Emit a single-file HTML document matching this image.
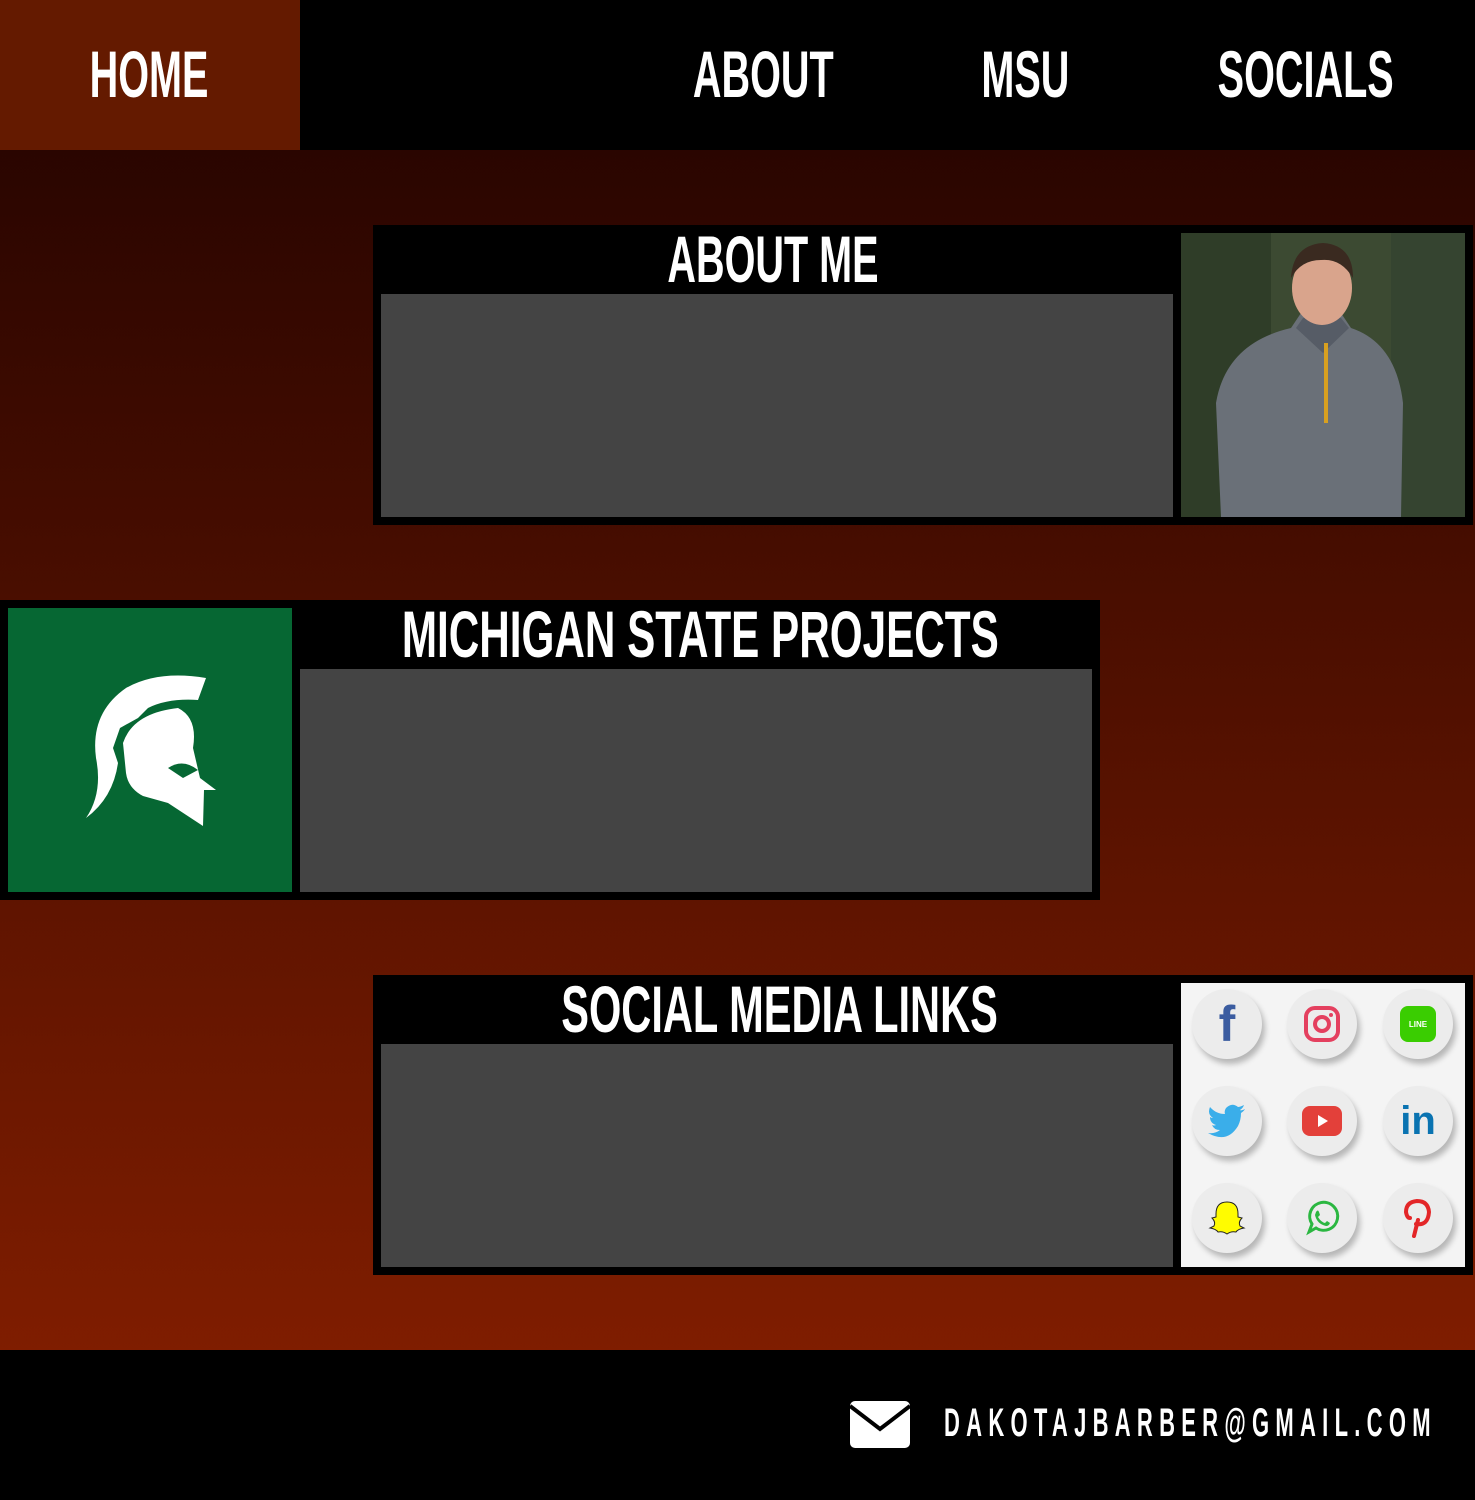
<!DOCTYPE html>
<html><head><meta charset="utf-8"><style>
*{margin:0;padding:0;box-sizing:border-box}
body{width:1475px;height:1500px;position:relative;overflow:hidden;background:linear-gradient(#2a0500 150px,#7f1d00 1350px);font-family:"Liberation Sans",sans-serif;font-weight:bold;color:#fff}
.a{position:absolute}
.t{position:absolute;text-align:center;font-size:66px;line-height:66px;white-space:nowrap;width:2000px}
.t span{display:inline-block;transform:scaleX(.6)}
.gray{position:absolute;background:#444}
.ic{position:absolute;width:70px;height:70px;border-radius:50%;background:#ececec;box-shadow:3px 5px 6px rgba(0,0,0,.25);display:flex;align-items:center;justify-content:center}
</style></head><body>
<div class="a" style="left:0;top:0;width:1475px;height:150px;background:#000"></div>
<div class="a" style="left:0;top:0;width:300px;height:150px;background:#641a00"></div>
<div class="t" style="left:-851px;top:41px"><span>HOME</span></div>
<div class="t" style="left:-237px;top:41px"><span>ABOUT</span></div>
<div class="t" style="left:25px;top:41px"><span>MSU</span></div>
<div class="t" style="left:306px;top:41px"><span>SOCIALS</span></div>

<!-- about -->
<div class="a" style="left:373px;top:225px;width:1100px;height:300px;background:#000"></div>
<div class="t" style="left:-227px;top:226px"><span>ABOUT ME</span></div>
<div class="gray" style="left:381px;top:294px;width:792px;height:223px"></div>
<svg class="a" style="left:1181px;top:233px" width="284" height="284" viewBox="0 0 284 284">
<rect width="284" height="284" fill="#3c4a32"/>
<rect x="0" y="0" width="90" height="284" fill="#2f3d28"/>
<rect x="210" y="0" width="74" height="284" fill="#354430"/>
<path d="M40 284 L35 170 Q45 110 110 95 L120 80 L160 80 L170 95 Q215 110 222 170 L220 284Z" fill="#6a7078"/>
<path d="M115 95 L142 120 L168 95 L160 85 L122 85Z" fill="#565c66"/>
<rect x="143" y="110" width="4" height="80" fill="#d8a020"/>
<ellipse cx="141" cy="55" rx="30" ry="37" fill="#d9a48c"/>
<path d="M110 45 Q112 12 142 10 Q172 12 172 45 Q160 25 140 27 Q120 27 110 45Z" fill="#3a2a20"/>
</svg>

<!-- msu -->
<div class="a" style="left:0;top:600px;width:1100px;height:300px;background:#000"></div>
<div class="a" style="left:8px;top:608px;width:284px;height:284px;background:#066733"></div>
<svg class="a" style="left:8px;top:608px" width="284" height="284" viewBox="0 0 284 284">
<path d="M78 210 Q95 185 88 150 Q82 105 118 80 Q150 62 198 70 L190 92 Q160 90 140 100 L130 110 L112 120 L105 140 L110 155 Q105 190 78 210Z" fill="#fff"/>
<path d="M115 135 Q125 105 170 100 Q190 110 185 140 L192 170 L208 182 L196 182 L195 218 L160 195 L135 188 Q120 180 118 165Z" fill="#fff"/>
<path d="M160 160 Q175 150 190 162 L175 170Z" fill="#066733"/>
</svg>
<div class="t" style="left:-300px;top:601px"><span style="transform:scaleX(.64)">MICHIGAN STATE PROJECTS</span></div>
<div class="gray" style="left:300px;top:669px;width:792px;height:223px"></div>

<!-- social -->
<div class="a" style="left:373px;top:975px;width:1100px;height:300px;background:#000"></div>
<div class="t" style="left:-220px;top:976px"><span style="transform:scaleX(.63)">SOCIAL MEDIA LINKS</span></div>
<div class="gray" style="left:381px;top:1044px;width:792px;height:223px"></div>
<div class="a" style="left:1181px;top:983px;width:284px;height:284px;background:#f4f4f4"></div>
<div class="ic" style="left:1192px;top:989px"><span style="color:#3b5ca0;font-size:50px;font-family:'Liberation Sans'">f</span></div>
<div class="ic" style="left:1287px;top:989px"><svg width="36" height="36" viewBox="0 0 36 36"><rect x="2" y="2" width="32" height="32" rx="9" fill="none" stroke="#e4405f" stroke-width="4"/><circle cx="18" cy="18" r="7" fill="none" stroke="#e4405f" stroke-width="4"/><circle cx="27" cy="9" r="2" fill="#e4405f"/></svg></div>
<div class="ic" style="left:1383px;top:989px"><div style="width:36px;height:36px;border-radius:8px;background:#3acd01;color:#fff;font-size:8px;display:flex;align-items:center;justify-content:center">LINE</div></div>
<div class="ic" style="left:1192px;top:1086px"><svg width="40" height="34" viewBox="0 0 40 34"><path d="M38 5 Q34 7 33 6 Q36 4 37 1 Q33 3 31 3 Q25 -2 19 4 Q17 7 18 10 Q9 10 3 3 Q0 10 6 14 Q4 14 3 13 Q3 19 9 21 Q7 22 5 21 Q7 26 13 26 Q8 30 1 29 Q20 40 31 22 Q34 16 34 9 Q37 7 38 5Z" fill="#3aaeea"/></svg></div>
<div class="ic" style="left:1287px;top:1086px"><svg width="40" height="30" viewBox="0 0 40 30"><rect width="40" height="30" rx="8" fill="#e3403a"/><path d="M16 9 L26 15 L16 21Z" fill="#fff"/></svg></div>
<div class="ic" style="left:1383px;top:1086px"><span style="color:#0a73b1;font-size:40px">in</span></div>
<div class="ic" style="left:1192px;top:1183px"><svg width="38" height="38" viewBox="0 0 38 38"><path d="M19 3 Q30 3 30 15 L30 18 L34 19 Q30 23 32 27 L36 29 Q30 30 28 33 Q23 32 19 35 Q15 32 10 33 Q8 30 2 29 L6 27 Q8 23 4 19 L8 18 L8 15 Q8 3 19 3Z" fill="#fffc00" stroke="#222" stroke-width="1"/></svg></div>
<div class="ic" style="left:1287px;top:1183px"><svg width="36" height="36" viewBox="0 0 36 36"><path d="M5 32 L8 24 A14 14 0 1 1 12 28Z" fill="none" stroke="#2bb741" stroke-width="3"/><path d="M12 12 Q14 9 15 12 L16 15 L14 17 Q17 22 21 23 L23 21 L26 23 Q25 26 22 26 Q13 24 11 15Z" fill="#2bb741"/></svg></div>
<div class="ic" style="left:1383px;top:1183px"><svg width="30" height="40" viewBox="0 0 30 40"><path d="M11 38 L15 22 M13 26 Q25 28 26 14 Q25 3 14 3 Q3 4 3 14 Q4 20 7 20" fill="none" stroke="#e32628" stroke-width="4" stroke-linecap="round"/></svg></div>

<!-- footer -->
<div class="a" style="left:0;top:1350px;width:1475px;height:150px;background:#000"></div>
<svg class="a" style="left:850px;top:1401px" width="60" height="47" viewBox="0 0 60 47"><rect width="60" height="47" rx="5" fill="#fff"/><path d="M0 5 L30 28 L60 5" fill="none" stroke="#000" stroke-width="4"/></svg>
<div class="a" style="left:944px;top:1399px;font-size:40px;line-height:48px;letter-spacing:11.4px;transform:scaleX(.55);transform-origin:left;white-space:nowrap;font-weight:bold">DAKOTAJBARBER@GMAIL.COM</div>
</body></html>
